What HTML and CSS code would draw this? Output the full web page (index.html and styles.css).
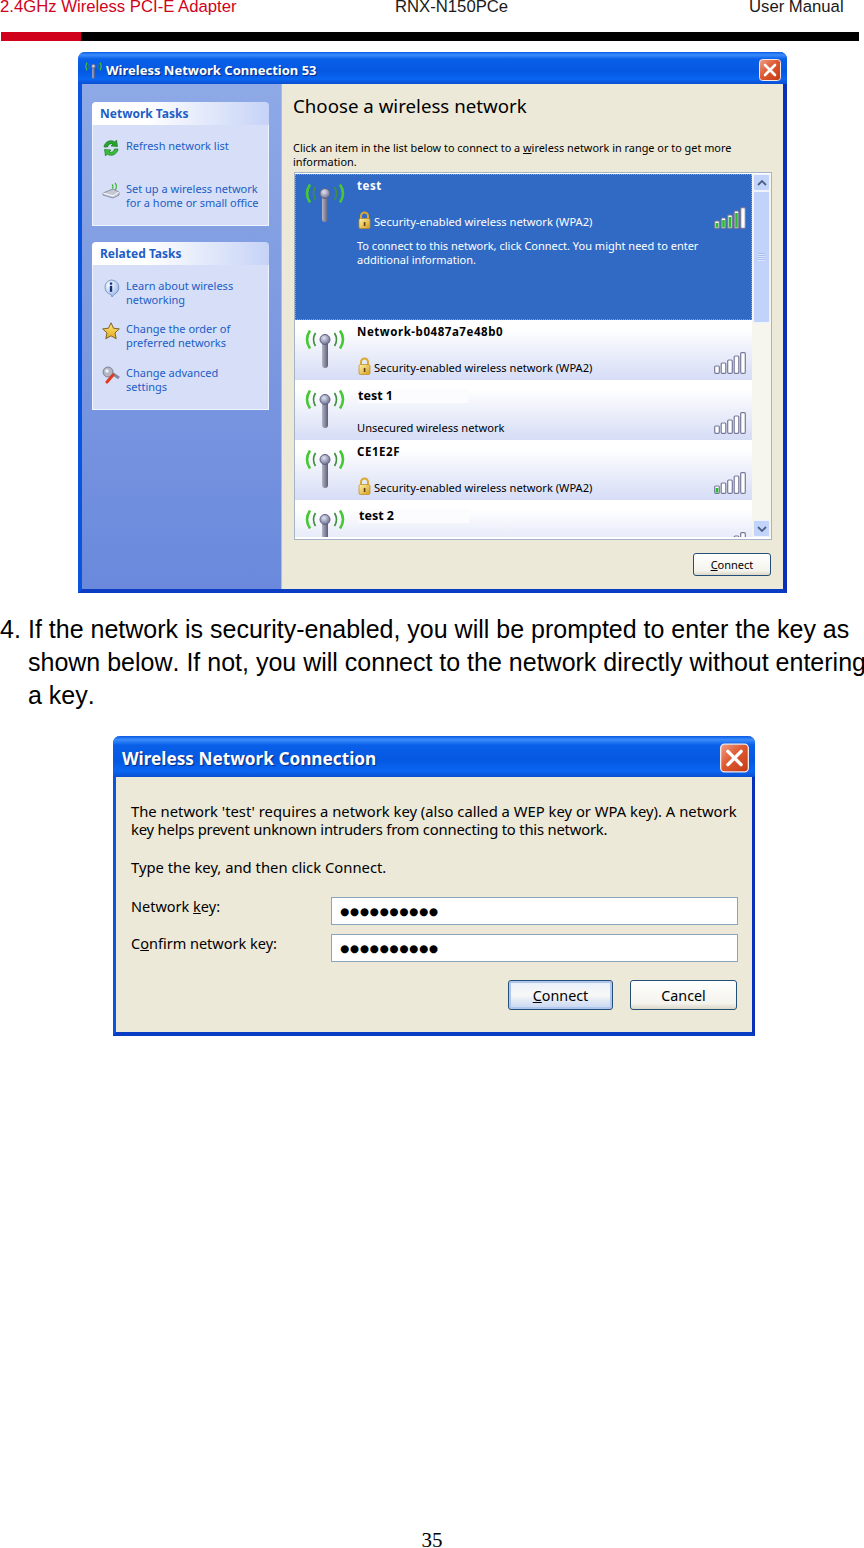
FILE: index.html
```html
<!DOCTYPE html>
<html lang="en">
<head>
    <meta charset="UTF-8">
    <title>RNX-N150PCe User Manual - page 35</title>
    <link rel="stylesheet" href="styles.css">
</head>
<body>
    <!-- Shared icons -->
    <svg class="sprite" aria-hidden="true">
        <defs>
            <linearGradient id="lock-fill" x1="0" y1="0" x2="1" y2="1">
                <stop offset="0" stop-color="#fff2a8"/>
                <stop offset="1" stop-color="#d49a1c"/>
            </linearGradient>
            <linearGradient id="star-fill" x1="0" y1="0" x2="0" y2="1">
                <stop offset="0" stop-color="#ffe97a"/>
                <stop offset="1" stop-color="#e5a91d"/>
            </linearGradient>
            <linearGradient id="stick-fill" x1="0" y1="0" x2="1" y2="0">
                <stop offset="0" stop-color="#b4b4c8"/>
                <stop offset="1" stop-color="#5c5c74"/>
            </linearGradient>
            <radialGradient id="ball-fill" cx="0.4" cy="0.35" r="0.7">
                <stop offset="0" stop-color="#e2e4f2"/>
                <stop offset="1" stop-color="#66688a"/>
            </radialGradient>
            <radialGradient id="info-fill" cx="0.35" cy="0.3" r="0.8">
                <stop offset="0" stop-color="#ffffff"/>
                <stop offset="1" stop-color="#8fb2ea"/>
            </radialGradient>
            <linearGradient id="close-fill" x1="0" y1="0" x2="1" y2="1">
                <stop offset="0" stop-color="#f0a088"/>
                <stop offset="0.45" stop-color="#de5a32"/>
                <stop offset="1" stop-color="#c23a14"/>
            </linearGradient>
        </defs>
        <symbol id="antenna" viewBox="0 0 40 40">
            <path d="M5 1.500Q-1 10.500 5 19.500M35 1.500Q41 10.500 35 19.500" fill="none" stroke="#46c832" stroke-width="2.600"/>
            <path d="M10.500 4Q6.500 10.500 10.500 17M29.500 4Q33.500 10.500 29.500 17" fill="none" stroke="#3f8f3c" stroke-width="1.700"/>
            <rect x="17" y="12" width="6" height="27" rx="3" fill="url(#stick-fill)"/>
            <circle cx="20" cy="10.500" r="5" fill="url(#ball-fill)" stroke="#5f6080"/>
        </symbol>
        <symbol id="lock" viewBox="0 0 13 18">
            <path d="M3 8V5a3.500 3.500 0 0 1 7 0v3" fill="none" stroke="#d8a830" stroke-width="2"/>
            <rect x="1" y="7.500" width="11" height="10" rx="1.500" fill="url(#lock-fill)" stroke="#c08a18" stroke-width="0.700"/>
            <rect x="5.800" y="11" width="1.600" height="4" fill="#5c4410"/>
        </symbol>
        <symbol id="bars" viewBox="0 0 32 22">
            <g fill="#fff" stroke="#77789a" stroke-width="1.200">
                <rect x="0.700" y="14" width="4.600" height="7.300" rx="1"/>
                <rect x="7.200" y="11" width="4.600" height="10.300" rx="1"/>
                <rect x="13.700" y="8" width="4.600" height="13.300" rx="1"/>
                <rect x="20.200" y="4" width="4.600" height="17.300" rx="1"/>
                <rect x="26.700" y="0.700" width="4.600" height="20.600" rx="1"/>
            </g>
        </symbol>
        <symbol id="close-x" viewBox="0 0 22 22">
            <rect x="0.500" y="0.500" width="21" height="21" rx="3" fill="url(#close-fill)" stroke="#f4e8e4"/>
            <path d="M6 6l10 10M16 6L6 16" stroke="#fff" stroke-width="2.600" stroke-linecap="round"/>
        </symbol>
    </svg>

    <header class="doc-header">
        <span class="doc-title">2.4GHz Wireless PCI-E Adapter</span>
        <span>RNX-N150PCe</span>
        <span>User Manual</span>
    </header>
    <div class="doc-rule"><div class="doc-rule-red"></div></div>

    <!-- Network list window -->
    <section class="xp-window network-window">
        <div class="xp-titlebar">
            <svg class="title-icon" viewBox="0 0 40 40"><use href="#antenna"/></svg>
            <span class="xp-title">Wireless Network Connection 53</span>
            <svg class="close-btn"><use href="#close-x"/></svg>
        </div>
        <div class="network-body">
            <aside class="sidebar">
                <div class="task-panel">
                    <div class="panel-head">Network Tasks</div>
                    <div class="panel-list">
                        <div class="task">
                            <svg class="task-icon" viewBox="0 0 18 18">
                                <path d="M2 8a7 7 0 0 1 11-5l1.500-2 1 6.500-6.500-.5 2-2A4 4 0 0 0 5.500 8z" fill="#27a52c" stroke="#0c6f18" stroke-width="0.600"/>
                                <path d="M16 10a7 7 0 0 1-11 5l-1.500 2-1-6.500 6.500.5-2 2a4 4 0 0 0 5.500-3z" fill="#3cbd3a" stroke="#0c6f18" stroke-width="0.600"/>
                            </svg>
                            <span>Refresh network list</span>
                        </div>
                        <div class="task task-wide">
                            <svg class="task-icon" viewBox="0 0 18 18">
                                <path d="M1 11l10-4 6 3v3l-6 3-10-3z" fill="#c5c9d6" stroke="#70748a" stroke-width="0.700"/>
                                <path d="M1 11l10 3 6-4" fill="none" stroke="#fff"/>
                                <path d="M10 2.500a2.500 2.500 0 0 1 0 4M13 1a5 5 0 0 1 0 7" fill="none" stroke="#35b52c" stroke-width="1.100"/>
                            </svg>
                            <span>Set up a wireless network<br>for a home or small office</span>
                        </div>
                    </div>
                </div>
                <div class="task-panel">
                    <div class="panel-head">Related Tasks</div>
                    <div class="panel-list">
                        <div class="task">
                            <svg class="task-icon" viewBox="0 0 18 18">
                                <path d="M9 1a8 7.500 0 0 1 3 14.400L10 18l-1-2.500A8 7.500 0 0 1 9 1z" fill="url(#info-fill)" stroke="#5f80b8" stroke-width="0.700"/>
                                <rect x="7.800" y="3.500" width="2.400" height="2.200" fill="#12307c"/>
                                <rect x="7.800" y="6.800" width="2.400" height="6" fill="#12307c"/>
                            </svg>
                            <span>Learn about wireless<br>networking</span>
                        </div>
                        <div class="task">
                            <svg class="task-icon" viewBox="0 0 18 18">
                                <path d="M9 .8l2.500 5.400 5.800.7-4.300 4 1.200 5.800L9 13.800l-5.200 2.900L5 10.900.7 6.900l5.800-.7z" fill="url(#star-fill)" stroke="#7c6428" stroke-width="1"/>
                            </svg>
                            <span>Change the order of<br>preferred networks</span>
                        </div>
                        <div class="task task-last">
                            <svg class="task-icon" viewBox="0 0 18 18">
                                <path d="M8 6l9 6" stroke="#84869a" stroke-width="3"/>
                                <circle cx="6" cy="6" r="5" fill="#b4b6c4" stroke="#65677a" stroke-width="0.700"/>
                                <circle cx="5" cy="5" r="1.800" fill="#eef0f6"/>
                                <path d="M11 9l-6 7" stroke="#e03a20" stroke-width="3" stroke-linecap="round"/>
                            </svg>
                            <span>Change advanced<br>settings</span>
                        </div>
                    </div>
                </div>
            </aside>
            <main class="network-main">
                <h1 class="choose-title">Choose a wireless network</h1>
                <p class="choose-hint">Click an item in the list below to connect to a <u>w</u>ireless network in range or to get more<br>information.</p>
                <div class="network-list">
                    <div class="network-rows">
                        <div class="network-row is-selected">
                            <svg class="antenna"><use href="#antenna"/></svg>
                            <div class="row-text">
                                <div class="row-name">test</div>
                                <div class="row-status row-status-selected"><svg class="lock"><use href="#lock"/></svg>Security-enabled wireless network (WPA2)</div>
                                <div class="row-desc">To connect to this network, click Connect. You might need to enter<br>additional information.</div>
                            </div>
                            <svg class="signal signal-selected" viewBox="0 0 32 22">
                                <use href="#bars"/>
                                <g fill="#29b92e">
                                    <rect x="1.700" y="16" width="2.600" height="4.500"/>
                                    <rect x="8.200" y="13" width="2.600" height="7.500"/>
                                    <rect x="14.700" y="10" width="2.600" height="10.500"/>
                                    <rect x="21.200" y="6" width="2.600" height="14.500"/>
                                </g>
                            </svg>
                        </div>
                        <div class="network-row">
                            <svg class="antenna"><use href="#antenna"/></svg>
                            <div class="row-text">
                                <div class="row-name">Network-b0487a7e48b0</div>
                                <div class="row-status"><svg class="lock"><use href="#lock"/></svg>Security-enabled wireless network (WPA2)</div>
                            </div>
                            <svg class="signal" viewBox="0 0 32 22"><use href="#bars"/></svg>
                        </div>
                        <div class="network-row">
                            <svg class="antenna"><use href="#antenna"/></svg>
                            <div class="row-text">
                                <div class="row-name row-name-large">test 1</div>
                                <div class="row-status">Unsecured wireless network</div>
                            </div>
                            <svg class="signal" viewBox="0 0 32 22"><use href="#bars"/></svg>
                        </div>
                        <div class="network-row">
                            <svg class="antenna"><use href="#antenna"/></svg>
                            <div class="row-text">
                                <div class="row-name">CE1E2F</div>
                                <div class="row-status"><svg class="lock"><use href="#lock"/></svg>Security-enabled wireless network (WPA2)</div>
                            </div>
                            <svg class="signal" viewBox="0 0 32 22">
                                <use href="#bars"/>
                                <rect x="1.700" y="16" width="2.600" height="4.500" fill="#29b92e"/>
                            </svg>
                        </div>
                        <div class="network-row">
                            <svg class="antenna"><use href="#antenna"/></svg>
                            <div class="row-text">
                                <div class="row-name row-name-large row-name-shift">test 2</div>
                            </div>
                            <svg class="signal" viewBox="0 0 32 22"><use href="#bars"/></svg>
                        </div>
                    </div>
                    <div class="scrollbar">
                        <div class="scroll-btn"><svg viewBox="0 0 10 6"><path d="M1 5l4-4 4 4" fill="none" stroke="#4d6185" stroke-width="1.800"/></svg></div>
                        <div class="scroll-thumb"><div class="scroll-grip"></div></div>
                        <div class="scroll-track"></div>
                        <div class="scroll-btn"><svg viewBox="0 0 10 6"><path d="M1 1l4 4 4-4" fill="none" stroke="#4d6185" stroke-width="1.800"/></svg></div>
                    </div>
                </div>
                <div class="network-actions">
                    <button class="xp-button small-button"><u>C</u>onnect</button>
                </div>
            </main>
        </div>
    </section>

    <p class="step"><span class="step-num">4.</span><span>If the network is security-enabled, you will be prompted to enter the key as<br>shown below. If not, you will connect to the network directly without entering<br>a key.</span></p>

    <!-- Network key dialog -->
    <section class="xp-window key-dialog">
        <div class="xp-titlebar key-titlebar">
            <span class="xp-title key-title">Wireless Network Connection</span>
            <svg class="close-btn key-close"><use href="#close-x"/></svg>
        </div>
        <div class="key-body">
            <p class="key-text">The network 'test' requires a network key (also called a WEP key or WPA key). A network<br><span class="key-tight">key helps prevent unknown intruders from connecting to this network.</span></p>
            <p class="key-text key-type">Type the key, and then click Connect.</p>
            <div class="key-field">
                <label>Network <u>k</u>ey:</label>
                <div class="key-input">●●●●●●●●●●</div>
            </div>
            <div class="key-field">
                <label>C<u>o</u>nfirm network key:</label>
                <div class="key-input">●●●●●●●●●●</div>
            </div>
            <div class="key-actions">
                <button class="xp-button xp-button-default"><u>C</u>onnect</button>
                <button class="xp-button">Cancel</button>
            </div>
        </div>
    </section>

    <footer class="page-num">35</footer>
</body>
</html>
```

FILE: styles.css
```css
* {
    box-sizing: border-box;
}

html, body {
    margin: 0;
    padding: 0;
}

body {
    width: 864px;
    height: 1548px;
    display: flex;
    flex-direction: column;
    overflow: hidden;
    background: #fff;
    font-family: "Liberation Sans", Arial, sans-serif;
    color: #000;
}

.sprite {
    width: 0;
    height: 0;
    flex: none;
}

/* Document header */
.doc-header {
    display: grid;
    grid-template-columns: 395px 354px auto;
    height: 32px;
    font-size: 16.700px;
    line-height: 14px;
    color: #1a1a1a;
}

.doc-title {
    color: #d0021b;
}

.doc-rule {
    margin-left: 1px;
    width: 858px;
    height: 9px;
    background: #000;
}

.doc-rule-red {
    width: 80px;
    height: 100%;
    background: #d0021b;
}

/* XP windows */
.xp-window {
    flex: none;
    display: flex;
    flex-direction: column;
    border-left: 4px solid #0a55e0;
    border-right: 4px solid #0a2fb8;
    border-bottom: 4px solid #0a3cc4;
    border-radius: 7px 7px 0 0;
    background: #ece9d8;
}

.xp-titlebar {
    flex: none;
    display: flex;
    align-items: center;
    height: 32px;
    margin: 0 -4px;
    padding: 4px 6px 0 7px;
    border-radius: 7px 7px 0 0;
    background: linear-gradient(#0a5ae4 0%, #3c8dfb 9%, #0a5fe8 22%, #0458e2 60%, #0a66f2 85%, #0a4fd0 100%);
}

.xp-title {
    flex: 1;
    font-family: "Noto Sans", sans-serif;
    font-weight: 700;
    font-size: 13px;
    color: #fff;
    text-shadow: 1px 1px 1px #0a2a80;
    white-space: nowrap;
}

.title-icon {
    flex: none;
    width: 17px;
    height: 17px;
    margin-right: 4px;
}

.close-btn {
    flex: none;
    width: 22px;
    height: 22px;
}

/* First window */
.network-window {
    width: 709px;
    height: 541px;
    margin: 11px 0 0 78px;
}

.network-body {
    flex: 1;
    display: flex;
    min-height: 0;
    font-family: "Noto Sans", sans-serif;
}

.sidebar {
    flex: none;
    display: flex;
    flex-direction: column;
    gap: 16px;
    width: 200px;
    padding: 18px 12px 0 10px;
    background: linear-gradient(#8ea9e6, #6a89dc);
    border-right: 1px solid #a9bbe8;
}

.task-panel {
    color: #215dc6;
}

.panel-head {
    height: 23px;
    padding-left: 8px;
    border-radius: 4px 4px 0 0;
    background: linear-gradient(90deg, #fff 30%, #c6d3f7 100%);
    font-size: 12px;
    font-weight: 700;
    line-height: 23px;
    white-space: nowrap;
}

.panel-list {
    display: flex;
    flex-direction: column;
    gap: 15px;
    padding: 14px 0 15px 9px;
    background: #d6dff7;
    border: 1px solid #f0f4fd;
    border-top: 0;
}

.task {
    display: flex;
    font-size: 11px;
    line-height: 14px;
    white-space: nowrap;
}

.task-wide {
    margin-top: 10px;
}

.task-last {
    margin-top: 1px;
}

.task-icon {
    flex: none;
    width: 18px;
    height: 18px;
    margin-right: 6px;
}

.network-main {
    flex: 1;
    display: flex;
    flex-direction: column;
    min-width: 0;
    padding: 0 11px 0 11px;
}

.choose-title {
    margin: 9px 0 0;
    font-size: 18.700px;
    font-weight: 400;
    line-height: 26px;
    white-space: nowrap;
}

.choose-hint {
    margin: 22px 0 3px;
    font-size: 10.900px;
    line-height: 14px;
    white-space: nowrap;
}

.network-list {
    display: flex;
    height: 368px;
    margin-left: 1px;
    padding: 1px 0 2px;
    background: #fff;
    border: 1px solid #a5b5c6;
}

.network-rows {
    flex: 1;
    min-width: 0;
    overflow: hidden;
}

.network-row {
    display: flex;
    height: 60px;
    padding: 0 6px 0 10px;
    background: linear-gradient(#fff 15%, #d5dcf5 100%);
    font-size: 11px;
    line-height: 14px;
}

.network-row.is-selected {
    height: 146px;
    background: #316ac5;
    outline: 1px dotted #b89a58;
    outline-offset: -1px;
    color: #fff;
}

.antenna {
    flex: none;
    width: 40px;
    height: 40px;
    margin-top: 9px;
    margin-right: 12px;
}

.row-text {
    flex: 1;
    display: flex;
    flex-direction: column;
    min-width: 0;
    padding: 5px 0 5px;
    white-space: nowrap;
}

.row-name {
    font-size: 11.500px;
    font-weight: 700;
    height: 14px;
    letter-spacing: 0.550px;
}

.row-name-large {
    align-self: flex-start;
    width: 110px;
    margin: 4px 0 0 1px;
    background: #fcfcff;
    font-size: 12.500px;
    letter-spacing: 0;
}

.row-name-shift {
    margin-left: 2px;
}

.row-status {
    display: flex;
    align-items: flex-end;
    height: 20px;
    margin-top: auto;
    font-size: 11.150px;
}

.row-status-selected {
    margin-top: 16px;
}

.lock {
    flex: none;
    width: 13px;
    height: 18px;
    margin: 0 3px 0 1px;
}

.row-desc {
    margin-top: 10px;
}

.signal {
    flex: none;
    width: 32px;
    height: 22px;
    margin-top: 32px;
}

.signal-selected {
    margin-top: 33px;
}

/* Scrollbar */
.scrollbar {
    flex: none;
    display: flex;
    flex-direction: column;
    width: 19px;
    padding: 0 1px;
    background: #f6f5ee;
}

.scroll-btn {
    flex: none;
    display: flex;
    align-items: center;
    justify-content: center;
    height: 17px;
    background: #c3d4fb;
    border: 1px solid #eef3fd;
    border-radius: 2px;
}

.scroll-btn svg {
    width: 10px;
    height: 6px;
}

.scroll-thumb {
    flex: none;
    display: flex;
    align-items: center;
    justify-content: center;
    height: 132px;
    background: #c1d2fb;
    border: 1px solid #eef3fd;
    border-radius: 2px;
}

.scroll-grip {
    width: 7px;
    height: 8px;
    background: repeating-linear-gradient(#a8bdf0 0 1px, #dce6fd 1px 2px);
}

.scroll-track {
    flex: 1;
}

.network-actions {
    display: flex;
    justify-content: flex-end;
    margin-top: 13px;
}

/* Buttons */
.xp-button {
    padding: 0;
    font-family: "Noto Sans", sans-serif;
    font-size: 14.300px;
    color: #000;
    background: linear-gradient(#fff, #f4f3ec 80%, #dcd8c8);
    border: 1px solid #234f78;
    border-radius: 3px;
}

.xp-button u {
    text-underline-offset: 1px;
}

.small-button {
    width: 78px;
    height: 23px;
    margin-right: 1px;
    font-size: 11px;
}

.xp-button-default {
    background: linear-gradient(#e8f0fc, #f8f8f6 50%, #c4d4f2);
    box-shadow: inset 0 0 0 2px #b0c6ec;
}

/* Step text */
.step {
    flex: none;
    display: flex;
    margin: 20px 0 0;
    font-size: 25px;
    font-kerning: none;
    line-height: 33px;
    white-space: nowrap;
}

.step-num {
    flex: none;
    width: 28px;
}

/* Key dialog */
.key-dialog {
    width: 642px;
    height: 300px;
    margin: 24px 0 0 113px;
    border-left-width: 3px;
    border-right-width: 3px;
}

.key-titlebar {
    height: 41px;
    margin: 0 -3px;
    padding: 3px 6px 0 9px;
}

.key-title {
    font-size: 17.200px;
}

.key-close {
    width: 29px;
    height: 30px;
}

.key-body {
    flex: 1;
    display: flex;
    flex-direction: column;
    padding: 25px 14px 0 15px;
    font-family: "Noto Sans", sans-serif;
    font-size: 14.800px;
    line-height: 18px;
}

.key-text {
    margin: 0;
    white-space: nowrap;
}

.key-tight {
    letter-spacing: -0.200px;
}

.key-type {
    margin-top: 20px;
}

.key-field {
    display: flex;
    align-items: center;
    height: 28px;
    margin-top: 9px;
}

.key-type + .key-field {
    margin-top: 21px;
}

.key-field label {
    flex: none;
    width: 200px;
    margin-top: -11px;
    font-size: 14.500px;
}

.key-input {
    width: 407px;
    height: 28px;
    padding-left: 8px;
    background: #fff;
    border: 1px solid #8aa4bc;
    font-family: "DejaVu Sans", sans-serif;
    font-size: 10.500px;
    letter-spacing: 0.700px;
    line-height: 26px;
    white-space: nowrap;
}

.key-actions {
    display: flex;
    justify-content: flex-end;
    gap: 17px;
    margin-top: 18px;
    padding-right: 1px;
}

.key-actions .xp-button {
    width: 107px;
    height: 30px;
}

.key-actions .xp-button-default {
    width: 105px;
}

.page-num {
    margin-top: auto;
    height: 15px;
    font-family: "Liberation Serif", "Times New Roman", serif;
    font-size: 21px;
    line-height: 15px;
    text-align: center;
}
```
